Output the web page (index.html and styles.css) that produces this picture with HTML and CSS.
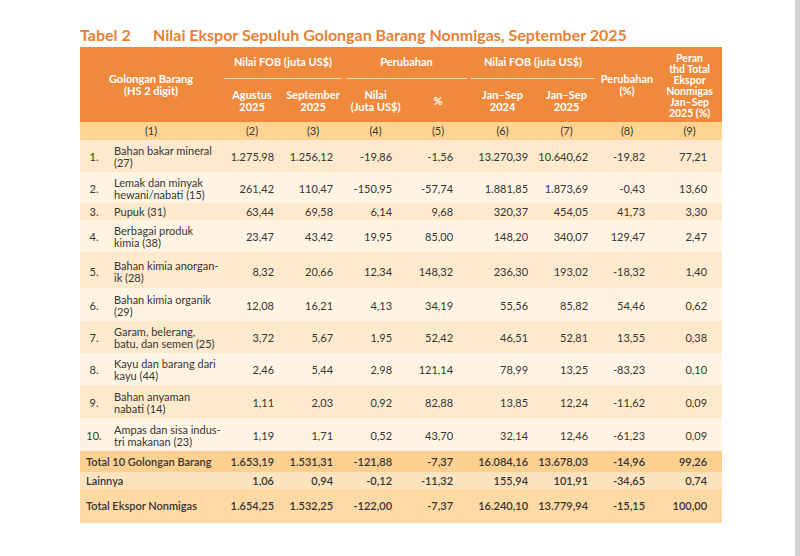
FILE: index.html
```html
<!DOCTYPE html>
<html lang="id">
<head>
<meta charset="utf-8">
<title>Tabel 2</title>
<link rel="stylesheet" href="styles.css">
</head>
<body>
<div class="page">
  <main class="sheet">
    <h1 class="title"><span class="title-no">Tabel 2</span><span>Nilai Ekspor Sepuluh Golongan Barang Nonmigas, September 2025</span></h1>
    <table class="tbl">
      <colgroup>
        <col class="w-no"><col class="w-name"><col class="w-c2"><col class="w-c3"><col class="w-c4"><col class="w-c5"><col class="w-c6"><col class="w-c7"><col class="w-c8"><col class="w-c9">
      </colgroup>
      <thead>
        <tr class="hr1">
          <th colspan="2" rowspan="2">Golongan Barang<br>(HS 2 digit)</th>
          <th colspan="2" class="group"><span>Nilai FOB (juta US$)</span></th>
          <th colspan="2" class="group"><span>Perubahan</span></th>
          <th colspan="2" class="group"><span>Nilai FOB (juta US$)</span></th>
          <th rowspan="2">Perubahan<br>(%)</th>
          <th rowspan="2" class="peran">Peran<br>thd Total<br>Ekspor<br>Nonmigas<br>Jan–Sep<br>2025 (%)</th>
        </tr>
        <tr class="hr2">
          <th>Agustus<br>2025</th>
          <th>September<br>2025</th>
          <th>Nilai<br>(Juta US$)</th>
          <th>%</th>
          <th>Jan–Sep<br>2024</th>
          <th>Jan–Sep<br>2025</th>
        </tr>
        <tr class="numrow">
          <td colspan="2">(1)</td><td>(2)</td><td>(3)</td><td>(4)</td><td>(5)</td><td>(6)</td><td>(7)</td><td>(8)</td><td>(9)</td>
        </tr>
      </thead>
      <tbody>
        <tr class="odd h32"><td class="no">1.</td><td class="name">Bahan bakar mineral<br>(27)</td><td class="n2">1.275,98</td><td class="n3">1.256,12</td><td class="n4">-19,86</td><td class="n5">-1,56</td><td class="n6">13.270,39</td><td class="n7">10.640,62</td><td class="n8">-19,82</td><td class="n9">77,21</td></tr>
        <tr class="even h31"><td class="no">2.</td><td class="name">Lemak dan minyak<br>hewani/nabati (15)</td><td class="n2">261,42</td><td class="n3">110,47</td><td class="n4">-150,95</td><td class="n5">-57,74</td><td class="n6">1.881,85</td><td class="n7">1.873,69</td><td class="n8">-0,43</td><td class="n9">13,60</td></tr>
        <tr class="odd h17"><td class="no">3.</td><td class="name">Pupuk (31)</td><td class="n2">63,44</td><td class="n3">69,58</td><td class="n4">6,14</td><td class="n5">9,68</td><td class="n6">320,37</td><td class="n7">454,05</td><td class="n8">41,73</td><td class="n9">3,30</td></tr>
        <tr class="even h32"><td class="no">4.</td><td class="name">Berbagai produk<br>kimia (38)</td><td class="n2">23,47</td><td class="n3">43,42</td><td class="n4">19,95</td><td class="n5">85,00</td><td class="n6">148,20</td><td class="n7">340,07</td><td class="n8">129,47</td><td class="n9">2,47</td></tr>
        <tr class="odd h36"><td class="no">5.</td><td class="name">Bahan kimia anorgan-<br>ik (28)</td><td class="n2">8,32</td><td class="n3">20,66</td><td class="n4">12,34</td><td class="n5">148,32</td><td class="n6">236,30</td><td class="n7">193,02</td><td class="n8">-18,32</td><td class="n9">1,40</td></tr>
        <tr class="even h33"><td class="no">6.</td><td class="name">Bahan kimia organik<br>(29)</td><td class="n2">12,08</td><td class="n3">16,21</td><td class="n4">4,13</td><td class="n5">34,19</td><td class="n6">55,56</td><td class="n7">85,82</td><td class="n8">54,46</td><td class="n9">0,62</td></tr>
        <tr class="odd h32"><td class="no">7.</td><td class="name">Garam, belerang,<br>batu, dan semen (25)</td><td class="n2">3,72</td><td class="n3">5,67</td><td class="n4">1,95</td><td class="n5">52,42</td><td class="n6">46,51</td><td class="n7">52,81</td><td class="n8">13,55</td><td class="n9">0,38</td></tr>
        <tr class="even h32"><td class="no">8.</td><td class="name">Kayu dan barang dari<br>kayu (44)</td><td class="n2">2,46</td><td class="n3">5,44</td><td class="n4">2,98</td><td class="n5">121,14</td><td class="n6">78,99</td><td class="n7">13,25</td><td class="n8">-83,23</td><td class="n9">0,10</td></tr>
        <tr class="odd h33"><td class="no">9.</td><td class="name">Bahan anyaman<br>nabati (14)</td><td class="n2">1,11</td><td class="n3">2,03</td><td class="n4">0,92</td><td class="n5">82,88</td><td class="n6">13,85</td><td class="n7">12,24</td><td class="n8">-11,62</td><td class="n9">0,09</td></tr>
        <tr class="even h33"><td class="no">10.</td><td class="name">Ampas dan sisa indus-<br>tri makanan (23)</td><td class="n2">1,19</td><td class="n3">1,71</td><td class="n4">0,52</td><td class="n5">43,70</td><td class="n6">32,14</td><td class="n7">12,46</td><td class="n8">-61,23</td><td class="n9">0,09</td></tr>
      </tbody>
      <tfoot>
        <tr class="tot1"><td colspan="2" class="label">Total 10 Golongan Barang</td><td class="n2">1.653,19</td><td class="n3">1.531,31</td><td class="n4">-121,88</td><td class="n5">-7,37</td><td class="n6">16.084,16</td><td class="n7">13.678,03</td><td class="n8">-14,96</td><td class="n9">99,26</td></tr>
        <tr class="tot2"><td colspan="2" class="label">Lainnya</td><td class="n2">1,06</td><td class="n3">0,94</td><td class="n4">-0,12</td><td class="n5">-11,32</td><td class="n6">155,94</td><td class="n7">101,91</td><td class="n8">-34,65</td><td class="n9">0,74</td></tr>
        <tr class="tot3"><td colspan="2" class="label">Total Ekspor Nonmigas</td><td class="n2">1.654,25</td><td class="n3">1.532,25</td><td class="n4">-122,00</td><td class="n5">-7,37</td><td class="n6">16.240,10</td><td class="n7">13.779,94</td><td class="n8">-15,15</td><td class="n9">100,00</td></tr>
      </tfoot>
    </table>
  </main>
  <div class="edge"></div>
</div>
</body>
</html>
```

FILE: styles.css
```css
* { box-sizing: border-box; }
html, body { margin: 0; padding: 0; }
body {
  background: #ffffff;
  font-family: Lato, "Open Sans", "Liberation Sans", sans-serif;
  color: #363636;
}
.page {
  display: flex;
  width: 800px;
  height: 556px;
  overflow: hidden;
}
.sheet {
  flex: 1;
  padding: 25px 0 0 80px;
  background: #ffffff;
}
.edge {
  width: 5px;
  background: #d2d2d2;
}
.title {
  display: flex;
  width: 642px;
  margin: 0 0 2px 0;
  font-size: 16px;
  line-height: 20px;
  font-weight: 700;
  color: #e98033;
}
.title-no { width: 73px; }

.tbl {
  width: 642px;
  border-collapse: collapse;
  table-layout: fixed;
  font-size: 11px;
  line-height: 12px;
}
.w-no { width: 26px; }
.w-name { width: 116px; }
.w-c2 { width: 60px; }
.w-c3 { width: 62px; }
.w-c4 { width: 63px; }
.w-c5 { width: 62px; }
.w-c6 { width: 67px; }
.w-c7 { width: 61px; }
.w-c8 { width: 60px; }
.w-c9 { width: 65px; }

.tbl th {
  background: #ef8a3d;
  color: #ffffff;
  font-weight: 700;
  text-align: center;
  vertical-align: middle;
  padding: 0;
  line-height: 12px;
}
.hr1 { height: 32px; }
.hr2 { height: 43px; }
.tbl th.group {
  vertical-align: bottom;
  padding: 0 2px;
}
.group span {
  display: block;
  padding: 9px 0 10px;
  border-bottom: 1px solid #fbdcc2;
}
.tbl th.peran {
  font-size: 10.5px;
  line-height: 11px;
  padding-top: 2px;
}
.numrow td {
  background: #fdd492;
  text-align: center;
  height: 18px;
  padding: 0;
  vertical-align: middle;
}

.tbl td { padding: 0; vertical-align: middle; }
.odd td { background: #fde9cb; }
.even td { background: #fff4e3; }
.h17 td { height: 17px; }
.h31 td { height: 31px; padding-top: 2px; }
.h32 td { height: 32px; padding-top: 2px; }
.h33 td { height: 33px; padding-top: 2px; }
.h36 td { height: 36px; padding-top: 3px; }

.no { text-align: center; padding-left: 2px !important; }
.name { padding-left: 8px !important; }
.n2, .n3, .n4, .n5, .n6, .n7, .n8, .n9 { text-align: right; }
.n2 { padding-right: 8px !important; }
.n3 { padding-right: 11px !important; }
.n4 { padding-right: 15px !important; }
.n5 { padding-right: 16px !important; }
.n6 { padding-right: 8px !important; }
.n7 { padding-right: 9px !important; }
.n8 { padding-right: 12px !important; }
.n9 { padding-right: 15px !important; }

tfoot td { font-weight: 600; }
.label { padding-left: 6px !important; }
.tot1 td { background: #fcd090; height: 21px; }
.tot2 td { background: #fde3bd; height: 17px; }
.tot3 td { background: #fdd9a3; height: 34px; }
```
